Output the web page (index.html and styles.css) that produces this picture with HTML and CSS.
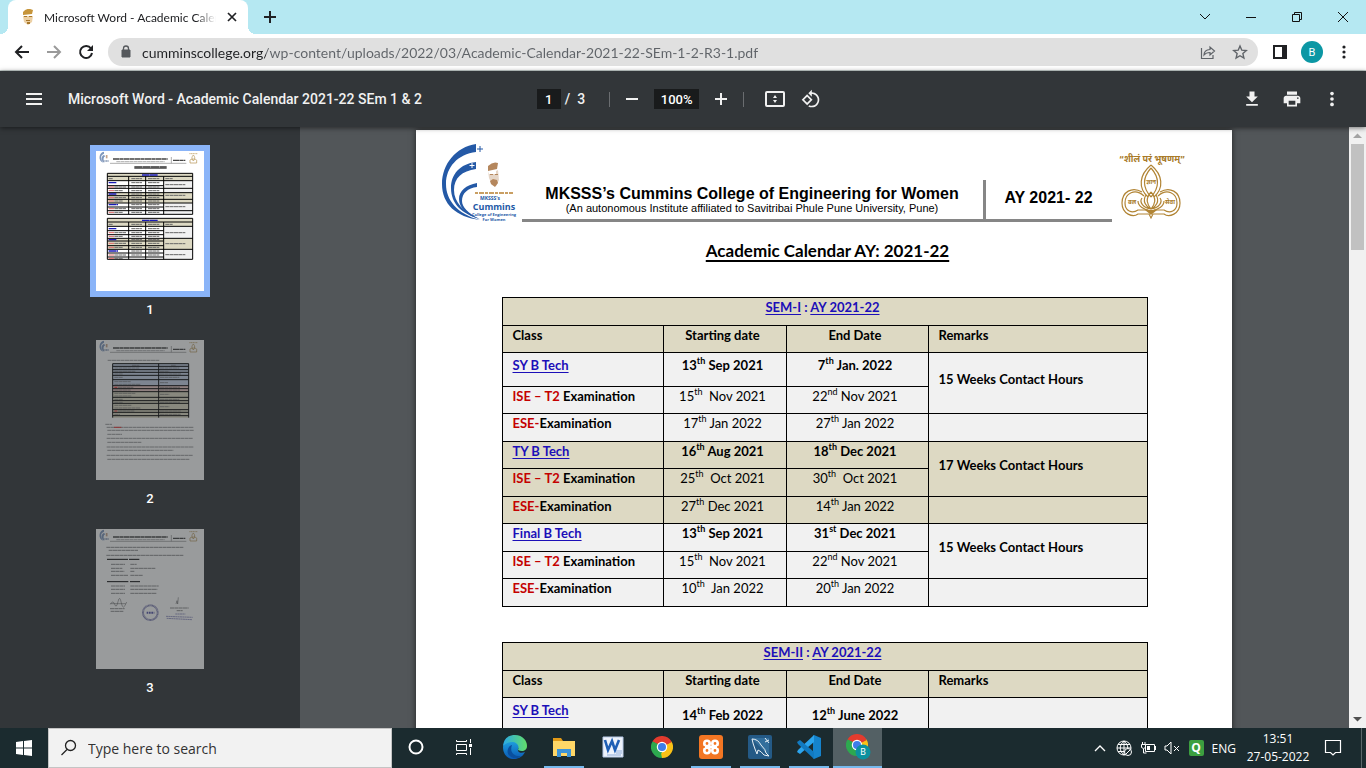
FILE: index.html
```html
<!DOCTYPE html>
<html lang="en">
<head>
<meta charset="utf-8">
<title>Microsoft Word - Academic Calendar 2021-22 SEm 1 &amp; 2</title>
<link rel="stylesheet" href="styles.css">
</head>
<body>
<svg class="defs" width="0" height="0" aria-hidden="true">
  <defs>
    <linearGradient id="edgeBlue" x1="0" y1="0" x2="0" y2="1"><stop offset="0" stop-color="#1fa3e0"/><stop offset="1" stop-color="#0b59b5"/></linearGradient>
    <linearGradient id="edgeGreen" x1="0" y1="0" x2="1" y2="0"><stop offset="0" stop-color="#2aa9e6"/><stop offset="1" stop-color="#62dd6a"/></linearGradient>
    <symbol id="chrome" viewBox="0 0 24 24">
      <path fill="#e33b2e" d="M12 12 1.6 6A12 12 0 0 1 22.4 6Z"/>
      <path fill="#fbc116" d="M12 12 22.4 6A12 12 0 0 1 12 24Z"/>
      <path fill="#2da94f" d="M12 12 12 24A12 12 0 0 1 1.6 6Z"/>
      <path fill="#e33b2e" d="M12 6.5H22.7L12 12Z"/>
      <path fill="#fbc116" d="M16.8 14.8 12 24 11 19Z"/>
      <path fill="#2da94f" d="M7.2 14.8 1.6 6 8 9Z"/>
      <circle cx="12" cy="12" r="5.7" fill="#fff"/><circle cx="12" cy="12" r="4.4" fill="#3f7de8"/>
    </symbol>
    <symbol id="college" viewBox="0 0 74 78">
      <g fill="#2459a6">
        <path d="M34 0C14 3 0 20 0 40C0 60 14 73 38 76C15 70 4 56 4 40C4 23 16 10 34 8Z"/>
        <path d="M34 18C18 20 9 30 9 44C9 60 20 70 38 75C21 68 12 58 12 46C12 34 20 27 34 25Z"/>
        <path d="M35 39C24 41 17 47 17 55C17 64 25 71 37 75C26 69 20 63 20 57C20 49 26 44 35 43Z"/>
      </g>
      <path stroke="#2459a6" d="M38 2v6M35 5h6"/><path stroke="#fff" d="M30 19v5M27.500 21.500h5"/>
      <g fill="#b5875d"><path d="M46 22q5-5 10-3l-1 6-9 2z"/><path d="M46 27l1 7 3 7 4 1 3-6-1-10-2 1 0 3-7 0z" opacity=".35"/><path d="M48 37l3-2 4 1 1 3-3 4-4-3zM48 30h3v1h-3zM53 30h3v1h-3z"/></g>
    </symbol>
    <symbol id="crest" viewBox="0 0 68 72">
      <g fill="none" stroke="#b18434" stroke-width="1.200">
        <path d="M33 16C21 26 20 39 30 48M33 16C45 26 46 39 36 48M33 19C25 28 24 38 33 48M33 19C41 28 42 38 33 48"/>
        <path d="M24 43C14 37 4 43 4 54C4 65 15 69 20 65L31 65L33 69L35 65L46 65C51 69 62 65 62 54C62 43 52 37 42 43"/>
        <path d="M26 47C17 39 7 44 7 54C7 62 14 65 20 61L30 61M40 47C49 39 59 44 59 54C59 62 52 65 46 61L36 61"/>
        <path d="M33 43C27 50 29 55 33 60C37 55 39 50 33 43M28 46C24 52 28 58 33 60M38 46C42 52 38 58 33 60M24 49C21 53 25 59 33 60M42 49C45 53 41 59 33 60M20 52C20 57 26 61 33 62M46 52C46 57 40 61 33 62"/>
      </g>
      <path fill="#b18434" d="M27 61h12l-6 5z"/>
    </symbol>
    <symbol id="thumbhead" viewBox="0 0 324 60">
      <g fill="#7e97bd"><path d="M24 2C8 4 5 30 22 35C14 25 12 12 24 8ZM24 12C14 15 15 30 25 35C21 25 22 18 28 16Z"/></g>
      <path stroke="#8799b5" stroke-width="4" stroke-dasharray="3 1" d="M22 30h17"/><path stroke="#c5a48c" stroke-width="5" d="M32 12v10"/>
      <path stroke="#444" stroke-width="4" stroke-dasharray="18 1 12 1" d="M51 24H215M231 28H268"/>
      <path stroke="#888" stroke-width="2" stroke-dasharray="12 1" d="M61 32H206"/>
      <path stroke="#888" stroke-width="2" d="M42 37H271M226 18V37"/>
      <g fill="none" stroke="#b28f4b" stroke-width="2"><path d="M280 8h24" stroke-dasharray="4 1"/><path d="M292 12c-6 7-5 11 0 18c5-7 6-11 0-18M282 36v-8c0-5 20-5 20 0v8z"/></g>
    </symbol>
  </defs>
</svg>

<header class="tabs">
  <div class="tab">
    <svg class="i16" viewBox="0 0 16 16"><path fill="#c6953b" d="M3 3q4-5 10-2l-1 4-9 1z"/><path fill="#ecd0a4" d="M3 7h10l-1 6-4 3-4-3z"/><path fill="#a9782c" d="M4 7h3v1H4zM9 7h3v1H9zM6 11h4v1H6zM7 13h3v2H7z"/></svg>
    <span class="tab-title">Microsoft Word - Academic Calendar</span>
    <button class="plain" aria-label="Close tab"><svg width="16" height="16" viewBox="0 0 16 16"><path d="M4 4l8 8M12 4l-8 8" stroke="#202124" stroke-width="1.700"/></svg></button>
  </div>
  <button class="plain newtab" aria-label="New tab"><svg width="16" height="16"><path d="M8 2v12M2 8h12" stroke="#202124" stroke-width="2"/></svg></button>
  <div class="window-buttons">
    <button class="plain" aria-label="Search tabs"><svg width="12" height="12"><path d="M1 3l5 5 5-5" fill="none" stroke="#111"/></svg></button>
    <button class="plain" aria-label="Minimize"><svg width="12" height="12"><path d="M1 6.500h10" stroke="#111"/></svg></button>
    <button class="plain" aria-label="Restore"><svg width="12" height="12"><path d="M1.500 3.500h7v7h-7zM3.500 3.500v-2h7v7h-2" fill="none" stroke="#111"/></svg></button>
    <button class="plain" aria-label="Close"><svg width="12" height="12"><path d="M1 1l10 10M11 1L1 11" stroke="#111"/></svg></button>
  </div>
</header>

<nav class="navbar">
  <button class="plain nav" aria-label="Back"><svg width="16" height="16"><path d="M15 8H2M8 2L2 8l6 6" fill="none" stroke="#202124" stroke-width="2"/></svg></button>
  <button class="plain nav" aria-label="Forward"><svg width="16" height="16"><path d="M1 8h13M8 2l6 6-6 6" fill="none" stroke="#9a9a9a" stroke-width="2"/></svg></button>
  <button class="plain nav" aria-label="Reload"><svg width="16" height="16"><path d="M13 4.500A6 6 0 1 0 14 9" fill="none" stroke="#202124" stroke-width="2"/><path d="M15 1v6H9z" fill="#202124"/></svg></button>
  <div class="address">
    <svg width="10" height="14" viewBox="0 0 10 14"><path d="M1 5h8v7H1z" fill="#55585c" stroke="#55585c" stroke-linejoin="round"/><path d="M2.500 6V3.500a2.500 2.500 0 0 1 5 0V6" fill="none" stroke="#55585c" stroke-width="1.300"/></svg>
    <input class="url" aria-label="Address" value="cumminscollege.org/wp-content/uploads/2022/03/Academic-Calendar-2021-22-SEm-1-2-R3-1.pdf">
    <button class="plain" aria-label="Share"><svg width="16" height="16"><path d="M1.500 4v10.500H13V11M4 11q0-5 6-5.500V3l4.500 4L10 11V8.500Q6 8.500 4 11z" fill="none" stroke="#5f6368" stroke-width="1.200"/></svg></button>
    <button class="plain" aria-label="Bookmark"><svg width="16" height="16"><path d="M8 2l1.800 4.200 4.500.4-3.400 3 1 4.400L8 11.700 4.100 14l1-4.400-3.400-3 4.500-.4z" fill="none" stroke="#5f6368" stroke-width="1.400"/></svg></button>
  </div>
  <button class="plain side" aria-label="Side panel"><svg width="14" height="14"><path d="M1 1h12v12H1z" fill="none" stroke="#202124" stroke-width="2"/><path d="M9 1h4v12H9z" fill="#202124"/></svg></button>
  <button class="plain avatar" aria-label="Profile">B</button>
  <button class="plain more" aria-label="Menu"><svg width="4" height="16" fill="#202124"><circle cx="2" cy="3" r="1.600"/><circle cx="2" cy="8" r="1.600"/><circle cx="2" cy="13" r="1.600"/></svg></button>
</nav>

<div class="pdfbar">
  <div class="bar-left">
    <button class="plain" aria-label="Sidebar"><svg width="16" height="12"><path d="M0 1h16M0 6h16M0 11h16" stroke="#f1f1f1" stroke-width="2"/></svg></button>
    <span class="doc-name">Microsoft Word - Academic Calendar 2021-22 SEm 1 &amp; 2</span>
  </div>
  <div class="bar-mid">
    <input class="field page-no" aria-label="Page number" value="1"><span class="slash">/</span><span class="total">3</span>
    <span class="rule"></span>
    <button class="plain zoom" aria-label="Zoom out"><svg width="12" height="12"><path d="M0 6h12" stroke="#f1f1f1" stroke-width="2"/></svg></button>
    <input class="field percent" aria-label="Zoom level" value="100%">
    <button class="plain zoom" aria-label="Zoom in"><svg width="12" height="12"><path d="M0 6h12M6 0v12" stroke="#f1f1f1" stroke-width="2"/></svg></button>
    <span class="rule"></span>
    <button class="plain tool fit" aria-label="Fit to page"><svg width="20" height="18"><rect x="1" y="2" width="18" height="14" rx="1" fill="none" stroke="#f1f1f1" stroke-width="2"/><path d="M8 8l2-3 2 3zM8 10l2 3 2-3z" fill="#f1f1f1"/></svg></button>
    <button class="plain tool" aria-label="Rotate"><svg width="20" height="20" viewBox="0 0 24 24" fill="#f1f1f1"><path d="M7.340 6.410L.86 12.900l6.490 6.480 6.490-6.480-6.500-6.490zM3.690 12.900l3.660-3.660L11 12.900l-3.660 3.660-3.650-3.660zm15.670-6.260C17.610 4.880 15.300 4 13 4V.76L8.760 5 13 9.240V6c1.790 0 3.580.68 4.950 2.050 2.730 2.730 2.730 7.170 0 9.900C16.580 19.320 14.790 20 13 20c-.97 0-1.940-.21-2.840-.61l-1.490 1.490C10.020 21.620 11.510 22 13 22c2.300 0 4.610-.88 6.360-2.640 3.520-3.510 3.520-9.210 0-12.720z"/></svg></button>
  </div>
  <div class="bar-right">
    <button class="plain" aria-label="Download"><svg width="20" height="20" viewBox="0 0 24 24" fill="#f1f1f1"><path d="M19 9h-4V3H9v6H5l7 7 7-7zM5 18v2h14v-2H5z"/></svg></button>
    <button class="plain" aria-label="Print"><svg width="20" height="20" viewBox="0 0 24 24" fill="#f1f1f1"><path d="M19 8H5c-1.660 0-3 1.340-3 3v6h4v4h12v-4h4v-6c0-1.660-1.340-3-3-3zm-3 11H8v-5h8v5zm3-7c-.55 0-1-.45-1-1s.45-1 1-1 1 .45 1 1-.45 1-1 1zm-1-9H6v4h12V3z"/></svg></button>
    <button class="plain" aria-label="More actions"><svg width="20" height="20" viewBox="0 0 24 24" fill="#f1f1f1"><circle cx="12" cy="5.500" r="2.200"/><circle cx="12" cy="12" r="2.200"/><circle cx="12" cy="18.500" r="2.200"/></svg></button>
  </div>
</div>

<main class="viewer">
  <aside class="thumbs">
    <button class="plain thumb current">
      <svg class="sheet" viewBox="0 0 324 420">
        <rect width="324" height="420" fill="#fff"/><use href="#thumbhead" width="324" height="60"/>
        <path stroke="#333" stroke-width="4" stroke-dasharray="24 1" d="M115 48H212"/><path stroke="#000" stroke-width="2" d="M115 52H212"/>
        <path fill="#ddd9c3" d="M34 67h256v22H34zM34 125h256v31H34zM34 202h256v24H34zM34 262h256v33H34z"/>
        <path fill="#f1f1f1" d="M204 89h86v36h-86zM204 156h86v33h-86zM204 226h86v36h-86zM204 295h86v30h-86z"/>
        <path fill="none" stroke="#000" stroke-width="3" d="M34 67H290V190H34ZM34 76H290M34 89H290M34 104H203M34 112H290M34 125H290M34 134H203M34 145H290M34 156H290M34 168H203M34 179H290M98 76V190M149 76V190M203 76V190M34 202H290V325H34ZM34 213H290M34 226H290M34 239H203M34 251H203M34 262H290M34 270H203M34 284H203M34 295H290M34 306H203M34 318H203M98 213V325M149 213V325M203 213V325"/>
        <path stroke="#1a1ab8" stroke-width="4" stroke-dasharray="22 1" d="M138 72H186M138 208H186M38 95H62M38 129H62M38 161H66M38 233H62M38 266H62M38 300H66"/>
        <path stroke="#d66" stroke-width="3" d="M38 108H54M38 119H54M38 140H54M38 150H54M38 173H54M38 184H54M38 245H54M38 256H54M38 277H54M38 289H54M38 312H54M38 322H54"/>
        <path stroke="#666" stroke-width="3" stroke-dasharray="12 1" d="M55 108H90M55 119H80M55 140H90M55 150H80M55 173H90M55 184H80M55 245H90M55 256H80M55 277H90M55 289H80M55 312H90M55 322H80M38 83H50M106 83H138M156 83H190M208 83H230M106 95H138M156 95H190M208 101H268M106 108H138M156 108H190M106 119H138M156 119H190M106 129H138M156 129H190M208 133H268M106 140H138M156 140H190M106 150H138M156 150H190M106 161H138M156 161H190M208 167H268M106 173H138M156 173H190M106 184H138M156 184H190M38 220H50M106 220H138M156 220H190M208 220H230M106 233H138M156 233H190M106 245H138M156 245H190M208 245H268M106 256H138M156 256H190M106 266H138M156 266H190M106 277H138M156 277H190M208 278H268M106 289H138M156 289H190M106 300H138M156 300H190M106 312H138M156 312H190M208 311H268"/>
      </svg>
      <span>1</span>
    </button>
    <button class="plain thumb">
      <svg class="sheet" viewBox="0 0 324 420">
        <rect width="324" height="420" fill="#fff"/><use href="#thumbhead" width="324" height="60"/>
        <path fill="#c8d4e8" d="M50 71h228v66H50z"/><path fill="#ebc9c4" d="M50 137h228v16H50z"/><path fill="#ddd9c3" d="M50 153h228v80H50z"/>
        <path fill="none" stroke="#000" stroke-width="3" d="M50 233V71H278V233M50 79H278M50 89H278M50 97H278M50 106H278M50 119H278M50 137H278M50 146H278M50 155H278M50 172H278M50 182H278M50 190H278M50 209H278M50 217H278M50 227H278M188 71V233"/>
        <path stroke="#666" stroke-width="2" stroke-dasharray="12 1" d="M35 61H190M108 76H130M225 76H240M55 84H130M192 84H250M55 94H118M192 94H220M55 102H80M192 102H255M55 112H80M192 112H250M55 125H104M192 128H216M55 133H134M66 142H112M192 142H252M55 150H104M192 150H252M55 160H118M192 163H220M55 168H106M55 178H80M192 178H250M55 187H80M192 187H252M55 196H106M192 200H220M55 204H134M66 213H115M192 213H254M55 223H72M192 223H254M28 253H48M32 262H293M34 271H293M34 283H78M32 295H290M34 307H136M32 321H293M34 331H232M32 346H290M34 358H280"/>
        <path stroke="#e33" stroke-width="3" d="M55 142H64M55 213H64M54 262H76"/>
      </svg>
      <span>2</span>
    </button>
    <button class="plain thumb">
      <svg class="sheet" viewBox="0 0 324 420">
        <rect width="324" height="420" fill="#fff"/><use href="#thumbhead" width="324" height="60"/>
        <path stroke="#555" stroke-width="2" stroke-dasharray="12 1" d="M31 55H262M38 64H126M31 79H262M45 106H87M103 106H122M45 118H79M103 118H178M45 127H85M103 127H115M45 139H96M103 139H140M45 171H87M103 171H188M45 181H87M103 181H184M45 193H87M103 193H182M42 239H86M44 247H83M222 237H278M242 245H260"/>
        <path stroke="#000" stroke-width="3" d="M33 91H96M99 91H130M33 158H97M102 158H132"/>
        <path fill="none" stroke="#555" stroke-width="1.500" d="M43 226q8-14 13 0t10-8 10 4 16-3M43 224h46M240 225l3-10 2 10 2-20"/>
        <circle cx="163" cy="251" r="22" fill="none" stroke="#8585b5" stroke-width="6" stroke-dasharray="3 1"/><path stroke="#5555aa" stroke-width="6" stroke-dasharray="5 2" d="M152 251h23"/>
        <path stroke="#6b6baa" stroke-width="2" stroke-dasharray="6 1" d="M238 255h30M210 262l80 3M212 268l76 4"/>
      </svg>
      <span>3</span>
    </button>
  </aside>

  <section class="pages">
    <article class="page">
      <header class="letterhead">
        <div class="college-logo">
          <svg viewBox="0 0 76 78"><use href="#college" width="74" height="78"/><g fill="#2459a6" font-family="Open Sans, sans-serif" font-weight="700" text-anchor="middle"><text x="48" y="56" font-size="5">MKSSS's</text><text x="52" y="66" font-size="9">Cummins</text><text x="52" y="72" font-size="4">College of Engineering</text><text x="52" y="77" font-size="4">For Women</text></g><path d="M33 49h38" stroke="#c99f63" stroke-width="2" stroke-dasharray="3 1 5 1"/></svg>
        </div>
        <div class="institute">
          <div class="names"><h1>MKSSS’s Cummins College of Engineering for Women</h1><p>(An autonomous Institute affiliated to Savitribai Phule Pune University, Pune)</p></div>
          <strong class="year">AY 2021- 22</strong>
        </div>
        <svg class="crest" viewBox="0 0 68 72"><use href="#crest" width="68" height="72"/><g fill="#a87a28" font-family="Noto Sans Devanagari, Noto Sans, sans-serif" font-weight="700" text-anchor="middle"><text x="34" y="13" font-size="9">“शीलं परं भूषणम्”</text><text x="33" y="35" font-size="6">ज्ञान</text><text x="14" y="55" font-size="6">बल</text><text x="52" y="55" font-size="6">सेवा</text></g></svg>
      </header>
      <h2>Academic Calendar AY: 2021-22</h2>

      <table class="calendar">
        <colgroup><col class="c-class"><col class="c-start"><col class="c-end"><col></colgroup>
        <thead>
          <tr class="sand tall"><th colspan="4" class="sem"><a href="#s1">SEM-I</a> : <a href="#s1">AY 2021-22</a></th></tr>
          <tr class="sand"><th>Class</th><th>Starting date</th><th>End Date</th><th>Remarks</th></tr>
        </thead>
        <tbody>
          <tr class="main first"><td><a href="#sy">SY B Tech</a></td><td>13<sup>th</sup> Sep 2021</td><td>7<sup>th</sup> Jan. 2022</td><td rowspan="2">15 Weeks Contact Hours</td></tr>
          <tr><td><em>ISE – T2</em> Examination</td><td>15<sup>th</sup>&nbsp; Nov 2021</td><td>22<sup>nd</sup> Nov 2021</td></tr>
          <tr class="tall"><td><em>ESE-</em>Examination</td><td>17<sup>th</sup> Jan 2022</td><td>27<sup>th</sup> Jan 2022</td><td></td></tr>
          <tr class="sand main"><td><a href="#ty">TY B Tech</a></td><td>16<sup>th</sup> Aug 2021</td><td>18<sup>th</sup> Dec 2021</td><td rowspan="2">17 Weeks Contact Hours</td></tr>
          <tr class="sand tall"><td><em>ISE – T2</em> Examination</td><td>25<sup>th</sup>&nbsp; Oct 2021</td><td>30<sup>th</sup>&nbsp; Oct 2021</td></tr>
          <tr class="sand"><td><em>ESE-</em>Examination</td><td>27<sup>th</sup> Dec 2021</td><td>14<sup>th</sup> Jan 2022</td><td></td></tr>
          <tr class="main tall"><td><a href="#fy">Final B Tech</a></td><td>13<sup>th</sup> Sep 2021</td><td>31<sup>st</sup> Dec 2021</td><td rowspan="2">15 Weeks Contact Hours</td></tr>
          <tr><td><em>ISE – T2</em> Examination</td><td>15<sup>th</sup>&nbsp; Nov 2021</td><td>22<sup>nd</sup> Nov 2021</td></tr>
          <tr class="tall"><td><em>ESE-</em>Examination</td><td>10<sup>th</sup>&nbsp; Jan 2022</td><td>20<sup>th</sup> Jan 2022</td><td></td></tr>
        </tbody>
      </table>

      <table class="calendar">
        <colgroup><col class="c-class"><col class="c-start"><col class="c-end"><col></colgroup>
        <thead>
          <tr class="sand tall"><th colspan="4" class="sem"><a href="#s2">SEM-II</a> : <a href="#s2">AY 2021-22</a></th></tr>
          <tr class="sand"><th>Class</th><th>Starting date</th><th>End Date</th><th>Remarks</th></tr>
        </thead>
        <tbody>
          <tr class="main opening"><td><a href="#sy2">SY B Tech</a></td><td>14<sup>th</sup> Feb 2022</td><td>12<sup>th</sup> June 2022</td><td></td></tr>
        </tbody>
      </table>
    </article>
  </section>
  <div class="scrollbar">
    <svg width="17" height="17"><path d="M4 11h9L8.500 6.500z" fill="#a3a3a3"/></svg>
    <div class="handle"></div>
    <svg width="17" height="17"><path d="M4 6h9L8.500 10.500z" fill="#505050"/></svg>
  </div>
</main>

<footer class="taskbar">
  <button class="plain start" aria-label="Start"><svg width="16" height="16" fill="#fff"><path d="M0 2l7-1v6.500H0zM8 1l8-1v7.500H8zM0 8.500h7V15l-7-1zM8 8.500h8V16l-8-1z"/></svg></button>
  <label class="search"><svg width="18" height="18"><circle cx="10.500" cy="6.500" r="5" fill="none" stroke="#222" stroke-width="1.300"/><path d="M7 10.500L1.500 16" stroke="#222" stroke-width="1.300"/></svg><input aria-label="Search" placeholder="Type here to search"></label>
  <button class="plain app sys" aria-label="Cortana"><svg width="16" height="16"><circle cx="8" cy="8" r="6.500" fill="none" stroke="#fff" stroke-width="2"/></svg></button>
  <button class="plain app sys" aria-label="Task View"><svg width="18" height="16" fill="none" stroke="#fff"><path d="M1.500 5.500h10v6h-10zM1.500 1v1.500h10V1M1.500 16v-1.500h10V16M15.500 0v4M15.500 9v7"/><path d="M14 5h3v3h-3z" fill="#fff" stroke="none"/></svg></button>
  <div class="apps">
    <button class="plain app" aria-label="Edge"><svg width="24" height="24"><path fill="url(#edgeBlue)" d="M0 12C1 6 7 4 12 6C17 8 17 12 15 14C14 17 18 19 22 17C19 23 14 24 11 24C4 24 0 19 0 12Z"/><path fill="url(#edgeGreen)" d="M0 11C1 3 6 0 12 0C20 0 24 6 24 11C24 16 19 17 15 15C17 10 13 7 9 7C5 7 2 9 0 11Z"/><path fill="#0a4f9e" d="M9 10C6 18 12 22 18 21C14 26 2 22 5 14C6 11 8 10 9 10Z"/></svg></button>
    <button class="plain app open" aria-label="File Explorer"><svg width="22" height="20"><path fill="#e29a17" d="M0 1h8l2 3H0z"/><path fill="#ffd767" d="M0 4h22v15H0z"/><path fill="#3d94d8" d="M4 12h14v8h-4v-4H8v4H4z"/></svg></button>
    <button class="plain app" aria-label="Word"><svg width="22" height="22"><path fill="#eef3fb" stroke="#b9cbe8" d="M1 1h20v20H1z"/><path stroke="#8dabd8" d="M14 15h6M14 17h6M5 19h14"/><path fill="none" stroke="#1f5fb5" stroke-width="2.600" d="M3 4l3 10 4-9 3 9 4-10"/></svg></button>
    <button class="plain app" aria-label="Chrome"><svg width="22" height="22"><use href="#chrome" width="22" height="22"/></svg></button>
    <button class="plain app open" aria-label="XAMPP"><svg width="24" height="24"><rect width="24" height="24" rx="3" fill="#f37623"/><g fill="none" stroke="#fff" stroke-width="2.600"><circle cx="8" cy="8.500" r="2.700"/><circle cx="8" cy="15.500" r="2.700"/><circle cx="16" cy="8.500" r="2.700"/><circle cx="16" cy="15.500" r="2.700"/><path d="M8 12h8"/></g><path d="M4 12h2M18 12h2" stroke="#f37623" stroke-width="1.600"/></svg></button>
    <button class="plain app open" aria-label="MySQL Workbench"><svg width="24" height="24"><rect width="24" height="24" rx="2" fill="#245a86"/><path d="M3 3l18 18V3z" fill="#336f9c"/><path d="M4 4q6 0 9 6 5 5 5 8l3 3-5-1q-3-4-6-5l-1 4-2-5Q5 9 4 4zM17 3l4 5M17 7l4-2" fill="none" stroke="#e8f0f5"/></svg></button>
    <button class="plain app open" aria-label="Visual Studio Code"><svg width="24" height="24"><path fill="#1583cc" d="M17 0l7 3v18l-7 3-1-1V1z"/><path fill="#2ca5ee" d="M17 0v7L3 19l-3-2 1-2z"/><path fill="#117ac1" d="M3 5L0 7l1 2 16 15v-7z"/></svg></button>
    <button class="plain app active" aria-label="Chrome, profile B"><svg width="28" height="28"><use href="#chrome" x="2" y="1" width="22" height="22"/><circle cx="19" cy="19" r="7.500" fill="#0b919f"/><text x="19" y="22" text-anchor="middle" font-family="Roboto, sans-serif" font-size="9" fill="#fff">B</text></svg></button>
  </div>
  <div class="tray">
    <svg class="chevron" width="12" height="12"><path d="M1 9l5-5 5 5" fill="none" stroke="#fff" stroke-width="1.300"/></svg>
    <svg width="16" height="16" fill="none" stroke="#fff"><circle cx="8" cy="8" r="7"/><path d="M1 8h14M8 1v14M8 1c-5 4-5 10 0 14M8 1c5 4 5 10 0 14M2 4.500h12M2 11.500h7"/><circle cx="12" cy="12" r="3.500" fill="#1b2b2f"/><path d="M9.500 14.500l5-5"/></svg>
    <svg width="16" height="14" fill="none" stroke="#fff"><path d="M5.500 3.500h9v7h-9zM15.500 5v4M2.500 1v2M5 1v2M1.500 3.500h4v3q-2 2-4 0zM3.500 8v4h3"/><path d="M7 5h3v4H7z" fill="#fff" stroke="none"/></svg>
    <svg width="16" height="14" fill="none" stroke="#fff"><path d="M1 5h2l4-4v12L3 9H1zM10 5l5 5M15 5l-5 5"/></svg>
    <span class="q">Q</span>
    <span class="lang">ENG</span>
    <time class="clock"><span>13:51</span><span>27-05-2022</span></time>
    <button class="plain" aria-label="Notifications"><svg width="18" height="18"><path d="M1.500 1.500h15v12h-5L9 16l-2.500-2.500h-5z" fill="none" stroke="#fff" stroke-width="1.200"/></svg></button>
    <span class="peek"></span>
  </div>
</footer>
</body>
</html>
```
FILE: styles.css
```css
* { box-sizing: border-box; }
body { margin: 0; height: 100vh; display: flex; flex-direction: column; overflow: hidden; font-family: "Open Sans", sans-serif; background: #525659; }
svg { display: block; flex: none; }
.defs { position: absolute; }
.plain { border: 0; padding: 0; background: none; color: inherit; font: inherit; display: flex; align-items: center; justify-content: center; }
input { min-width: 0; border: 0; padding: 0; outline: 0; background: none; font: inherit; }

/* Tab strip */
.tabs { flex: none; height: 34px; display: flex; align-items: center; background: #b5e8f2; padding-left: 8px; }
.tab { width: 240px; height: 34px; display: flex; align-items: center; gap: 8px; padding: 0 8px 0 12px; background: #fff; border-radius: 8px 8px 0 0; position: relative; }
.tab::before, .tab::after { content: ""; position: absolute; bottom: 0; width: 8px; height: 8px; }
.tab::before { right: 100%; background: radial-gradient(circle at 0 0, #b5e8f2 8px, #fff 8px); }
.tab::after { left: 100%; background: radial-gradient(circle at 100% 0, #b5e8f2 8px, #fff 8px); }
.i16 { width: 16px; height: 16px; }
.tab-title { flex: 1; overflow: hidden; white-space: nowrap; font-family: Lato, sans-serif; font-size: 12px; color: #202124; -webkit-mask-image: linear-gradient(to right, #000 88%, transparent); mask-image: linear-gradient(to right, #000 88%, transparent); }
.newtab { margin-left: 14px; }
.window-buttons { margin-left: auto; display: flex; height: 28px; }
.window-buttons .plain { width: 46px; }

/* Navigation bar */
.navbar { flex: none; height: 37px; display: flex; align-items: center; padding: 0 18px 0 6px; background: #fff; border-bottom: 1px solid #c9d3d0; }
.nav { width: 32px; height: 28px; }
.address { flex: 1; height: 28px; margin-left: 6px; padding: 0 10px 0 13px; display: flex; align-items: center; gap: 16px; background: #e0e0e0; border-radius: 14px; }
.address svg:first-child { margin-right: -5px; }
.address .plain svg { margin: 0; }
.url { flex: 1; font-family: Lato, sans-serif; font-size: 14px; background: linear-gradient(to right, #202124 124px, #5f6368 124px); -webkit-background-clip: text; background-clip: text; color: transparent; }
.side { margin-left: 15px; }
.avatar { width: 22px; height: 22px; margin: 0 17px 0 14px; border-radius: 50%; background: #0b97a4; color: #fff; font: 11px Roboto, sans-serif; }
.more { width: 8px; }

/* PDF toolbar */
.pdfbar { flex: none; height: 56px; display: grid; grid-template-columns: 1fr auto 1fr; align-items: center; background: #323639; color: #f1f1f1; font: 500 14px Roboto, sans-serif; box-shadow: 0 1px 5px #0008; z-index: 1; }
.bar-left { display: flex; align-items: center; gap: 26px; padding-left: 26px; }
.doc-name { white-space: nowrap; }
.bar-mid { display: flex; align-items: center; padding-right: 2px; }
.field { height: 20px; background: #191b1c; color: #fff; text-align: center; font-size: 13px; }
.page-no { width: 24px; }
.slash { margin: 0 7px 0 4px; }
.rule { width: 1px; height: 15px; background: #6a6d70; }
.total { margin-right: 24px; }
.zoom { width: 44px; height: 32px; }
.percent { width: 45px; }
.tool { width: 32px; height: 32px; }
.fit { margin: 0 4px 0 15px; }
.bar-right { display: flex; justify-content: flex-end; gap: 20px; padding-right: 24px; }

/* Viewer */
.viewer { flex: 1; min-height: 0; display: flex; }
.thumbs { flex: none; width: 300px; padding-top: 18px; display: flex; flex-direction: column; align-items: center; gap: 16px; background: #323639; color: #fff; font: 500 13px Roboto, sans-serif; overflow: hidden; }
.thumb { flex: none; flex-direction: column; gap: 5px; line-height: 16px; }
.sheet { width: 120px; padding: 6px; }
.thumb .sheet { height: 152px; }
.current .sheet { background: #8ab4f8; }
.thumb:not(.current) .sheet { opacity: 0.5; }
.pages { flex: 1; padding: 3px 2px 0 0; overflow: hidden; }
.page { width: min(816px, 100%); min-height: 1056px; margin: 0 auto; padding: 14px 46px 0 26px; background: #fff; box-shadow: 0 0 6px #0009; color: #000; font-family: Lato, sans-serif; }
.letterhead { display: flex; align-items: flex-start; }
.college-logo svg { width: 76px; height: 78px; }
.institute { flex: 1; display: flex; height: 78px; margin: 0 6px 0 4px; padding-top: 36px; border-bottom: 3px solid #868686; font-family: "Liberation Sans", sans-serif; }
.names { flex: 1; padding-top: 5px; text-align: center; border-right: 3px solid #868686; white-space: nowrap; }
.names h1 { margin: 0; font-size: 16px; line-height: 17px; }
.names p { margin: 0; font-size: 11px; line-height: 13px; }
.year { width: 126px; text-align: center; font-size: 16px; line-height: 36px; }
.crest { width: 68px; height: 72px; margin-top: 5px; }
.page h2 { margin: 19px 0 36px; padding-left: 28px; text-align: center; font-size: 17px; line-height: 20px; text-decoration: underline; text-underline-offset: 3px; text-decoration-thickness: 2px; }
.calendar { width: 646px; max-width: 100%; margin: 0 0 35px 60px; border-collapse: collapse; table-layout: fixed; font-size: 13px; line-height: 17px; background: #f1f1f1; }
.c-class { width: 161px; }
.c-start { width: 123px; }
.c-end { width: 142px; }
.calendar tr { height: 27px; }
.calendar .tall { height: 28px; }
.calendar .first { height: 34px; }
.calendar .opening { height: 61px; }
.calendar th, .calendar td { padding: 0 10px 8px; border: 1px solid #000; text-align: left; }
.calendar .opening td { padding-top: 4px; vertical-align: top; }
.calendar .opening td:nth-child(2), .calendar .opening td:nth-child(3) { padding-top: 9px; }
.calendar .sand { background: #ddd9c3; }
.calendar td:first-child, .calendar td:nth-child(4), .main td { font-weight: 700; }
.calendar td:nth-child(2), .calendar td:nth-child(3), .calendar th:nth-child(2), .calendar th:nth-child(3), .calendar .sem { padding-left: 4px; padding-right: 8px; text-align: center; }
.calendar .sem { color: #1c0fb8; }
.calendar a { color: #1c0fb8; text-underline-offset: 2px; }
.calendar em { font-style: normal; color: #c40000; }
sup { font-size: 9px; line-height: 0; vertical-align: 6px; }
.scrollbar { flex: none; width: 17px; display: flex; flex-direction: column; background: #f1f1f1; }
.handle { height: 106px; margin: 0 2px auto; background: #c1c1c1; }

/* Taskbar */
.taskbar { flex: none; height: 40px; display: flex; align-items: stretch; background: #1b2b2f; color: #fff; z-index: 1; }
.start { width: 48px; }
.search { width: 344px; display: flex; align-items: center; gap: 10px; padding-left: 11px; background: #f2f2f2; border: 1px solid #c4c4c4; }
.search input { flex: 1; font-size: 14px; }
.search input::placeholder { color: #333; opacity: 1; }
.app { width: 49px; height: 40px; border-bottom: 2px solid transparent; }
.sys { width: 48px; }
.apps { display: flex; margin-left: 2px; }
.open { background: linear-gradient(#76b9ed, #76b9ed) center bottom / 40px 2px no-repeat border-box; }
.active { background: #536064; border-bottom-color: #76b9ed; }
.tray { margin-left: auto; display: flex; align-items: center; gap: 8px; font-size: 12px; }
.chevron { margin-right: 2px; }
.q { width: 15px; height: 16px; border-radius: 2px; background: #3c9f3f; font-weight: 700; line-height: 15px; text-align: center; margin-left: 1px; }
.clock { width: 68px; margin: 0 4px 0 0; display: flex; flex-direction: column; align-items: center; line-height: 18px; font-size: 12px; }
.peek { width: 1px; height: 40px; margin: 0 4px 0 11px; background: #5a676a; }
```
